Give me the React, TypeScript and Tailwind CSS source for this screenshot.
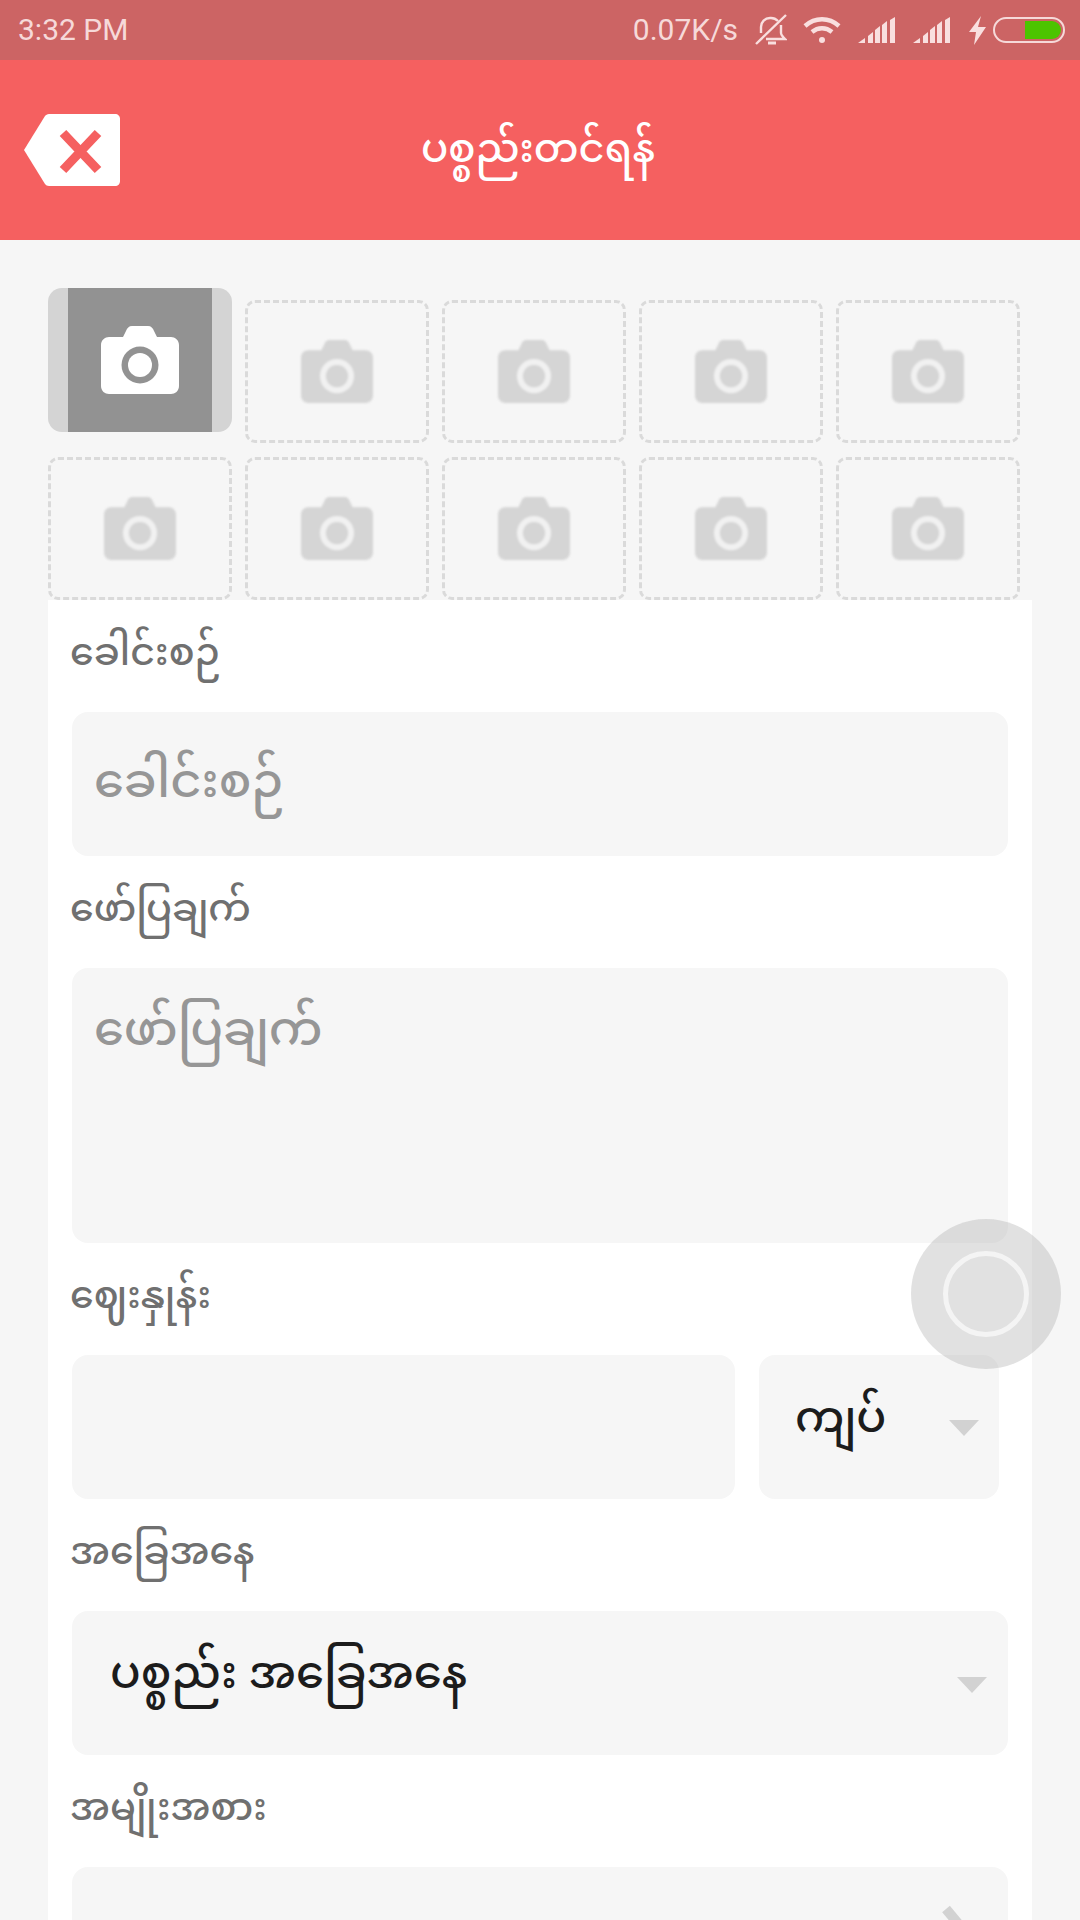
const myanmar = "font-['Noto_Sans_Myanmar','Padauk','Myanmar_Text','Noto_Sans','DejaVu_Sans',sans-serif] font-medium";

function Camera({ className, lens, ring }: { className: string; lens: string; ring: string }) {
  return (
    <svg viewBox="0 0 78 68" className={className}>
      <path
        d="M8 11h14l3-6c1-3 3-5 6-5h16c3 0 5 2 6 5l3 6h14c4 0 8 3 8 8v41c0 5-4 8-8 8H8c-4 0-8-3-8-8V19c0-5 4-8 8-8z"
        fill="currentColor"
      />
      <circle cx="39" cy="39" r="18.5" fill={ring} />
      <circle cx="39" cy="39" r="12" fill={lens} />
    </svg>
  );
}

function EmptySlot() {
  return (
    <div className="h-[143px] rounded-[10px] border-[3px] border-dashed border-[#dadada] flex items-center justify-center">
      <Camera className="w-[72px] h-[63px] text-[#d5d5d5] blur-[1px]" ring="#f1f1f1" lens="#d5d5d5" />
    </div>
  );
}

function Signal({ className }: { className: string }) {
  return (
    <svg viewBox="0 0 39 26" className={`w-[39px] h-[26px] ${className}`} fill="#f9dfdf">
      <path d="M0 26 7 21v5z" />
      <path d="M10 19l5-4v11h-5z" />
      <path d="M17 13l5-4v17h-5z" />
      <path d="M24 8l5-4v22h-5z" />
      <path d="M32 3l5-3v26h-5z" />
    </svg>
  );
}

function Label({ children }: { children: string }) {
  return <div className={`h-[56px] pt-[3px] -ml-[2px] flex items-center text-[38px] leading-none text-[#707070] ${myanmar}`}>{children}</div>;
}

function Arrow({ className }: { className: string }) {
  return <div className={`absolute w-0 h-0 border-x-[15px] border-t-[16px] border-x-transparent border-t-[#d2d2d2] ${className}`} />;
}

export default function App() {
  return (
    <div className="relative w-[1080px] h-[1920px] overflow-hidden bg-[#f6f6f6] font-['Roboto',sans-serif]">
      {/* status bar */}
      <div className="h-[60px] bg-[#cc6464] flex items-center justify-between pl-[18px] pr-[15px] text-[#f6d9d9] text-[30px]">
        <span className="-mt-[2px]">3:32 PM</span>
        <div className="flex items-center">
          <span className="mr-[17px] -mt-[2px]">0.07K/s</span>
          <svg viewBox="0 0 32 32" className="w-[32px] h-[32px] mr-[16px]" fill="none" stroke="#f9dfdf" strokeWidth="2.4">
            <path d="M1 30 31 1" />
            <path d="M6 19v-6c0-5 4-9 9-9h1c3 0 5 1 7 3" />
            <path d="M26 11v8c0 2 2 4 4 6H11" />
            <path d="M13 29h8" strokeWidth="3" />
          </svg>
          <svg viewBox="0 0 38 28" className="w-[38px] h-[28px] mr-[17px]" fill="none" stroke="#f9dfdf" strokeWidth="4.4">
            <path d="M2 10c10-9 24-9 34 0" />
            <path d="M9 16c6-5 14-5 20 0" />
            <circle cx="19" cy="24" r="3" fill="#f9dfdf" stroke="none" />
          </svg>
          <Signal className="mr-[16px]" />
          <Signal className="mr-[17px]" />
          <svg viewBox="0 0 17 29" className="w-[17px] h-[29px] mr-[7px]" fill="#f9dfdf">
            <path d="M12 0 0 16h7L5 29l12-18H9z" />
          </svg>
          <div className="w-[72px] h-[26px] rounded-full border-2 border-[#f6d9d9] flex justify-end p-[2px]">
            <div className="w-[36px] h-full rounded-r-full rounded-l-[1px] bg-[#4cc400]" />
          </div>
        </div>
      </div>

      {/* title bar */}
      <div className="relative h-[180px] bg-[#f56060] flex items-center justify-center">
        <svg viewBox="0 0 96 72" className="absolute left-[24px] top-[54px] w-[96px] h-[72px]">
          <path d="M21 2c1-1 2-2 4-2h66c3 0 5 2 5 5v62c0 3-2 5-5 5H25c-2 0-3-1-4-2L0 36z" fill="#fff" />
          <path d="M39 19l35 37M74 19 39 56" stroke="#f56060" strokeWidth="9" />
        </svg>
        <span className={`text-white text-[40px] pt-[5px] -ml-[4px] ${myanmar}`}>ပစ္စည်းတင်ရန်</span>
      </div>

      <div className="pl-[48px] pr-[48px] pt-[48px]">
        {/* photo slots */}
        <div className="w-[972px] grid grid-cols-5 gap-x-[13px] gap-y-[14px] items-end">
          <div className="h-[144px] mb-[11px] rounded-[14px] bg-[#d4d4d4] flex justify-center">
            <div className="w-[144px] h-full bg-[#929292] flex items-center justify-center">
              <Camera className="w-[78px] h-[68px] text-white" ring="#929292" lens="#ffffff" />
            </div>
          </div>
          {Array.from({ length: 9 }, (_, i) => (
            <EmptySlot key={i} />
          ))}
        </div>

        {/* form */}
        <div className="bg-white px-[24px] pt-[27px] h-[1400px]">
          <Label>ခေါင်းစဉ်</Label>
          <div className={`mt-[29px] h-[144px] rounded-[16px] bg-[#f6f6f6] px-[22px] pt-[38px] text-[48px] leading-[72px] text-[#969696] ${myanmar}`}>
            ခေါင်းစဉ်
          </div>
          <div className="mt-[27px]">
            <Label>ဖော်ပြချက်</Label>
          </div>
          <div className={`mt-[29px] h-[275px] rounded-[16px] bg-[#f6f6f6] px-[22px] pt-[30px] text-[48px] leading-[72px] text-[#969696] ${myanmar}`}>
            ဖော်ပြချက်
          </div>
          <div className="mt-[27px]">
            <Label>ဈေးနှုန်း</Label>
          </div>
          <div className="mt-[29px] flex">
            <div className="w-[663px] h-[144px] rounded-[16px] bg-[#f6f6f6]" />
            <div className={`relative ml-[24px] w-[240px] h-[144px] rounded-[16px] bg-[#f6f6f6] pl-[36px] pt-[31px] text-[44px] leading-[72px] text-[#1c1c1c] ${myanmar}`}>
              ကျပ်
              <Arrow className="left-[190px] top-[65px]" />
            </div>
          </div>
          <div className="mt-[27px]">
            <Label>အခြေအနေ</Label>
          </div>
          <div className={`relative mt-[29px] h-[144px] rounded-[16px] bg-[#f6f6f6] pl-[38px] pt-[31px] text-[45px] leading-[72px] text-[#1c1c1c] ${myanmar}`}>
            ပစ္စည်း အခြေအနေ
            <Arrow className="right-[21px] top-[66px]" />
          </div>
          <div className="mt-[27px]">
            <Label>အမျိုးအစား</Label>
          </div>
          <div className="relative mt-[29px] h-[144px] rounded-[16px] bg-[#f6f6f6] overflow-hidden">
            <svg viewBox="0 0 40 60" className="absolute left-[870px] top-[38px] w-[40px] h-[60px] blur-[0.5px]" fill="none" stroke="#d2d2d2" strokeWidth="10">
              <path d="M4 4l30 36" />
            </svg>
          </div>
        </div>
      </div>

      {/* floating assist button */}
      <div className="absolute left-[911px] top-[1219px] w-[150px] h-[150px] rounded-full bg-[#b4b4b4]/40 flex items-center justify-center">
        <div className="w-[86px] h-[86px] rounded-full border-[5px] border-[#f4f4f4]" />
      </div>
    </div>
  );
}
